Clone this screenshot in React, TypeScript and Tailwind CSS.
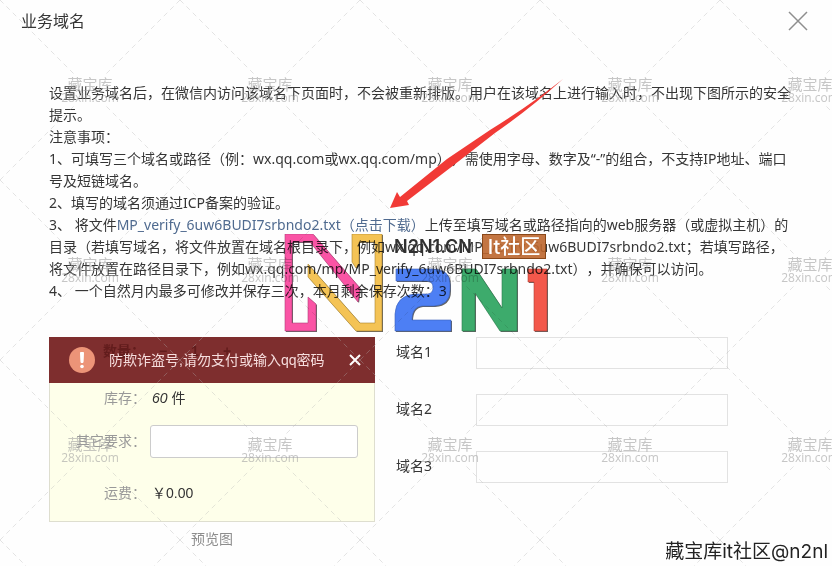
import React from "react";

const WATERMARK_MARKS = 15;

function Watermark() {
  return (
    <div aria-hidden="true" className="pointer-events-none absolute inset-0 overflow-hidden">
      <svg className="absolute inset-0 size-full">
        <defs>
          <pattern id="lattice" width="180" height="180" patternUnits="userSpaceOnUse">
            <path d="M0 0 75 75M180 0 105 75M0 180 75 105M180 180 105 105" fill="none" stroke="#b0b0b0" strokeOpacity="0.35" strokeDasharray="5 4" />
          </pattern>
        </defs>
        <rect width="100%" height="100%" fill="url(#lattice)" />
      </svg>
      <div className="grid w-max grid-cols-[repeat(5,180px)]">
        {Array.from({ length: WATERMARK_MARKS }, (_, i) => (
          <div key={i} className="flex h-[180px] flex-col items-center justify-center text-[#a0a0a0]/60">
            <span className="font-['Noto_Sans_CJK_SC',sans-serif] text-[15px] leading-4">藏宝库</span>
            <span className="font-['Open_Sans',sans-serif] text-xs leading-3">28xin.com</span>
          </div>
        ))}
      </div>
    </div>
  );
}

function Arrow() {
  return (
    <svg aria-hidden="true" viewBox="0 0 176 132" className="pointer-events-none absolute top-[78px] left-[389px] h-[132px] w-[176px]">
      <path d="M1 130 8 114 11 119 58 81 101 52Q140 28 174 1Q142 30 106 55L61 90 18 123 20 127Z" fill="#f13a36" />
    </svg>
  );
}

const PINK_STROKE = "M1 0H29L76 54 74 68 26 8H8V89H24V63L32 70V97H1Z";
const YELLOW_STROKE = "M68 0H98V97H72L24 43V30L76 89H91V8H75V30L72 34 68 28Z";
const BLUE_TWO = "M112 35H148Q166 35 166 50V56Q166 71 150 72H138Q128 73 128 86H167V97H111V80Q112 62 130 60H144Q149 59 149 54Q149 47 143 47H112Z";
const GREEN_N = "M178 35H192L218 74V35H233V97H216L191 59V97H178Z";
const RED_ONE = "M244 35H263V97H250V48H244Z";

function Logo() {
  return (
    <div className="pointer-events-none absolute top-[234px] left-[284px] h-[98px] w-[265px]">
      <svg aria-hidden="true" viewBox="0 0 265 98" className="absolute inset-0 size-full mix-blend-multiply">
        <g fill="#3c3c3c" opacity="0.8" transform="translate(1 1)">
          <path d={PINK_STROKE} />
          <path d={YELLOW_STROKE} />
          <path d={BLUE_TWO} />
          <path d={GREEN_N} />
          <path d={RED_ONE} />
        </g>
        <path d={PINK_STROKE} fill="#fb54a6" stroke="#b03f78" strokeWidth="0.6" />
        <path d={YELLOW_STROKE} fill="#f5c455" stroke="#a8842f" strokeWidth="0.6" />
        <path d={BLUE_TWO} fill="#4d80f5" stroke="#3a60b8" strokeWidth="0.6" />
        <path d={GREEN_N} fill="#3dac6c" stroke="#2b7d4d" strokeWidth="0.6" />
        <path d={RED_ONE} fill="#f4584b" stroke="#b04038" strokeWidth="0.6" />
      </svg>
      <span className="absolute top-[5px] left-[110px] font-['Inter',sans-serif] text-lg leading-4 font-semibold text-[#303030]">N2N1.CN</span>
      <span className="absolute top-0 left-[198px] flex h-[25px] w-[64px] items-center justify-center border border-[#894719] bg-[#bd662d]/90 font-['Inter','Noto_Sans_CJK_SC',sans-serif] text-[20px] leading-5 font-medium whitespace-nowrap text-white">
        It社区
      </span>
    </div>
  );
}

function Instructions() {
  return (
    <div className="text-sm leading-[22px] [text-spacing-trim:space-all]">
      <p>设置业务域名后，在微信内访问该域名下页面时，不会被重新排版。用户在该域名上进行输入时，不出现下图所示的安全提示。</p>
      <p>注意事项：</p>
      <p>1、可填写三个域名或路径（例：wx.qq.com或wx.qq.com/mp），需使用字母、数字及“-”的组合，不支持IP地址、端口号及短链域名。</p>
      <p>2、填写的域名须通过ICP备案的验证。</p>
      <p>
        3、 将文件<a href="#download" className="text-[#4f6a8f]">MP_verify_6uw6BUDI7srbndo2.txt（点击下载）</a>上传至填写域名或路径指向的web服务器（或虚拟主机）的目录（若填写域名，将文件放置在域名根目录下，例如wx.qq.com/MP_verify_6uw6BUDI7srbndo2.txt；若填写路径，将文件放置在路径目录下，例如wx.qq.com/mp/MP_verify_6uw6BUDI7srbndo2.txt），并确保可以访问。
      </p>
      <p>4、 一个自然月内最多可修改并保存三次，本月剩余保存次数：3</p>
    </div>
  );
}

function Preview() {
  return (
    <figure className="w-[326px] shrink-0 font-['Liberation_Sans','Noto_Sans_CJK_SC',sans-serif]">
      <div className="h-[185px] border border-[#dedecf] bg-[#feffea]">
        <div className="relative -mx-px -mt-px flex h-[46px] items-center bg-[#7e2e2e] pr-3 pl-5 text-white">
          <div aria-hidden="true" className="absolute top-1 left-[54px] flex text-sm leading-5 font-bold text-[#621c1c]">
            <span className="w-14">数量：</span><span className="w-8">−</span><span className="w-8">1</span><span>+</span>
          </div>
          <svg aria-hidden="true" viewBox="0 0 26 26" className="size-[26px]">
            <circle cx="13" cy="13" r="13" fill="#ec9478" />
            <path d="M11.5 5.5h3l-.5 10h-2z" fill="#fff" stroke="#fff" strokeLinejoin="round" />
            <circle cx="13" cy="19.5" r="1.8" fill="#fff" />
          </svg>
          <span className="relative ml-[14px] text-sm text-[#f6dddd]">防欺诈盗号,请勿支付或输入qq密码</span>
          <button type="button" aria-label="关闭提示" className="ml-auto p-0.5">
            <svg viewBox="0 0 12 12" className="size-3" stroke="#fff" strokeWidth="2"><path d="m1 1 10 10M11 1 1 11" /></svg>
          </button>
        </div>
        <div className="grid grid-cols-[96px_1fr] gap-x-1 pr-4 text-sm text-[#333]">
          <span className="pt-1 text-right leading-[22px] text-[#999]">库存：</span>
          <span className="pt-1 pl-0.5 leading-[22px]"><i>60</i> 件</span>
          <label htmlFor="request" className="mt-4 text-right leading-8 text-[#999]">其它要求：</label>
          <input id="request" className="mt-4 h-[33px] w-full rounded-[3px] border border-[#ccc] bg-white px-2" />
          <span className="mt-6 text-right leading-[22px] text-[#999]">运费：</span>
          <span className="mt-6 pl-0.5 leading-[22px]">￥0.00</span>
        </div>
      </div>
      <figcaption className="mt-1.5 text-center text-sm leading-[22px] text-[#8d8d8d]">预览图</figcaption>
    </figure>
  );
}

function DomainForm() {
  return (
    <form className="flex flex-1 flex-col gap-[25px]">
      {[1, 2, 3].map((n) => (
        <div key={n} className="flex">
          <label htmlFor={`domain-${n}`} className="w-20 pt-1 text-sm leading-[22px]">域名{n}</label>
          <input id={`domain-${n}`} className="h-8 w-[252px] border border-[#e2e2e2] bg-transparent px-2 text-sm" />
        </div>
      ))}
    </form>
  );
}

export default function App() {
  return (
    <div className="relative min-h-screen overflow-hidden bg-[#fefefe] font-['Noto_Sans','Noto_Sans_CJK_SC',sans-serif] text-[#353535]">
      <header className="flex h-[42px] items-center justify-between pr-6 pl-[21px]">
        <h1 className="text-base leading-6">业务域名</h1>
        <button type="button" aria-label="关闭">
          <svg viewBox="0 0 20 20" className="size-5" stroke="#8e8e8e" strokeWidth="1.5"><path d="m1 1 18 18M19 1 1 19" /></svg>
        </button>
      </header>
      <main className="pt-10 pr-9 pl-[49px]">
        <Instructions />
        <section className="mt-[35px] flex gap-[21px]">
          <Preview />
          <DomainForm />
        </section>
      </main>
      <Watermark />
      <Logo />
      <Arrow />
      <p className="absolute right-1 bottom-0.5 font-['Inter','Noto_Sans_CJK_SC',sans-serif] text-[19px] leading-6 text-[#222]">藏宝库it社区@n2nl</p>
    </div>
  );
}
